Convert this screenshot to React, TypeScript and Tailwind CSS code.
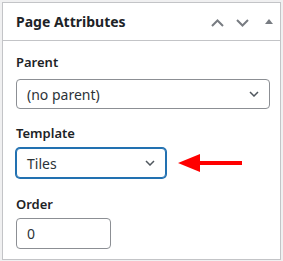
const font = { fontFamily: '"Noto Sans", "Open Sans", sans-serif' };

function SelectBox({ value, focused, className }: { value: string; focused?: boolean; className?: string }) {
  return (
    <div
      className={
        "flex items-center justify-between rounded-[4px] bg-white pl-[10px] pr-[10px] text-[14px] text-[#2c3338] " +
        (focused
          ? "border border-[#2271b1] shadow-[0_0_0_1px_#2271b1] "
          : "border border-[#8c8f94] ") +
        className
      }
    >
      <span>{value}</span>
      <svg width="10" height="6" viewBox="0 0 10 6" className="text-[#50575e]">
        <path d="M1 1l4 4 4-4" fill="none" stroke="currentColor" strokeWidth="1.5" />
      </svg>
    </div>
  );
}

export default function App() {
  return (
    <div className="w-[283px] h-[261px] bg-[#f0f0f1] p-[2px]" style={font}>
      <div className="h-[258px] w-[279px] border border-[#c3c4c7] bg-white">
        {/* header */}
        <div className="flex h-[38px] items-center justify-between border-b border-[#c3c4c7] pl-[13px] pr-[7px]">
          <h2 className="text-[14px] font-bold text-[#1d2327]">Page Attributes</h2>
          <div className="flex items-center pt-[2px] text-[#787c82]">
            <svg width="13" height="8" viewBox="0 0 13 8">
              <path d="M1 7l5.5-5.5L12 7" fill="none" stroke="currentColor" strokeWidth="2" />
            </svg>
            <svg width="13" height="8" viewBox="0 0 13 8" className="ml-[12px]">
              <path d="M1 1l5.5 5.5L12 1" fill="none" stroke="currentColor" strokeWidth="2" />
            </svg>
            <svg width="8" height="5" viewBox="0 0 8 5" className="ml-[16px] mb-[2px]">
              <path d="M0 5L4 0l4 5z" fill="currentColor" />
            </svg>
          </div>
        </div>

        {/* body */}
        <div className="flex flex-col pl-[13px] pr-[10px] pt-[11px] text-[#1d2327]">
          <label className="text-[13px] font-semibold leading-[20px]">Parent</label>
          <SelectBox value="(no parent)" className="mt-[7px] h-[30px] w-[254px]" />

          <label className="mt-[14px] text-[13px] font-semibold leading-[20px]">Template</label>
          <div className="mt-[5px] flex items-center">
            <SelectBox value="Tiles" focused className="h-[30px] w-[150px]" />
            <svg width="66" height="20" viewBox="0 0 66 20" className="ml-[12px]">
              <path d="M0 10L22 1v7h42v4H22v7z" fill="#ff0000" />
            </svg>
          </div>

          <label className="mt-[16px] text-[13px] font-semibold leading-[20px]">Order</label>
          <div className="mt-[4px] flex h-[31px] w-[95px] items-center rounded-[4px] border border-[#8c8f94] pl-[10px] text-[14px] text-[#2c3338]">
            0
          </div>
        </div>
      </div>
    </div>
  );
}
